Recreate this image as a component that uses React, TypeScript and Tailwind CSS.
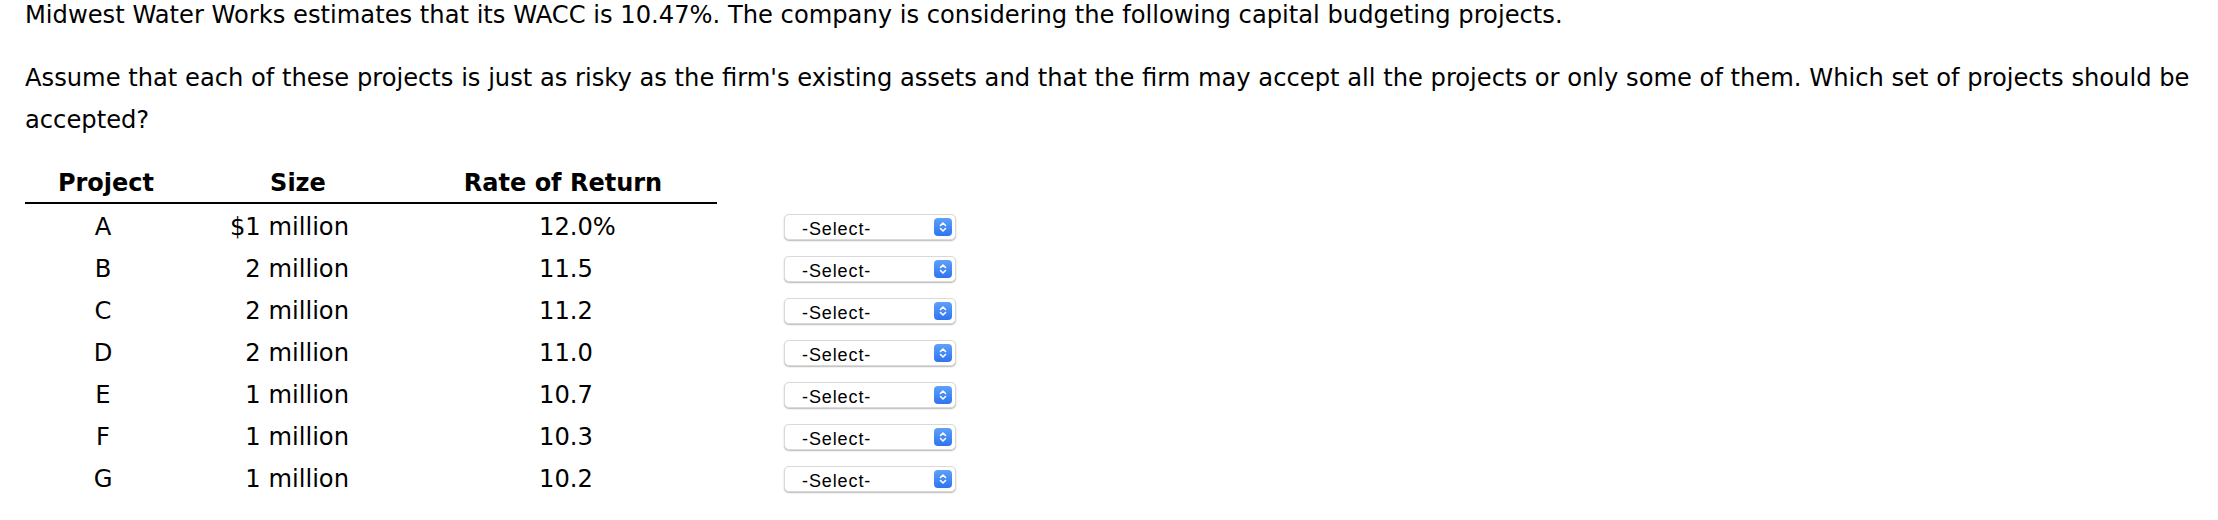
import React from "react";

const rows = [
  { p: "A", s: "$1 million", r: "12.0%" },
  { p: "B", s: "2 million", r: "11.5" },
  { p: "C", s: "2 million", r: "11.2" },
  { p: "D", s: "2 million", r: "11.0" },
  { p: "E", s: "1 million", r: "10.7" },
  { p: "F", s: "1 million", r: "10.3" },
  { p: "G", s: "1 million", r: "10.2" },
];

function SelectBox() {
  return (
    <div className="relative w-[172px] h-[26px] rounded-[5px] border border-[#d9d9d9] bg-white shadow-[0_1px_1.5px_rgba(0,0,0,0.28)]">
      <span className="absolute left-[17px] top-[3px] text-[18px] leading-[22px] tracking-[0.9px] text-black font-['Liberation_Sans',Arial,sans-serif]">
        -Select-
      </span>
      <div className="absolute right-[3px] top-[3px] w-[18px] h-[18px] rounded-[4px] bg-gradient-to-b from-[#5fa0fa] to-[#2e74ef] flex items-center justify-center">
        <svg width="10" height="14" viewBox="0 0 10 14" fill="none">
          <path d="M2.5 5.5 L5 3 L7.5 5.5" stroke="white" strokeWidth="1.6" strokeLinecap="round" strokeLinejoin="round" />
          <path d="M2.5 8.5 L5 11 L7.5 8.5" stroke="white" strokeWidth="1.6" strokeLinecap="round" strokeLinejoin="round" />
        </svg>
      </div>
    </div>
  );
}

export default function App() {
  return (
    <div className="w-[2218px] h-[520px] bg-white text-black pl-[25px] pr-[10px] font-['DejaVu_Sans',sans-serif] text-[24.2px]">
      <p className="leading-[30px] whitespace-nowrap">
        Midwest Water Works estimates that its WACC is 10.47%. The company is considering the following capital budgeting projects.
      </p>
      <p className="mt-[27px] leading-[42px]">
        <span className="whitespace-nowrap">
          Assume that each of these projects is just as risky as the firm's existing assets and that the firm may accept all the projects or only some of them. Which set of projects should be
        </span>
        <br />
        accepted?
      </p>
      <div className="flex mt-[11px]">
        <div className="w-[692px] shrink-0">
          <div className="flex border-b-2 border-black h-[52px] items-end pb-[5px] font-bold text-[24px] leading-[28px]">
            <div className="w-[162px] text-center">Project</div>
            <div className="w-[222px] text-center">Size</div>
            <div className="w-[308px] text-center">Rate of Return</div>
          </div>
          <div className="pt-[2px]">
            {rows.map((row) => (
              <div key={row.p} className="flex h-[42px] items-center leading-[42px]">
                <div className="w-[156px] text-center">{row.p}</div>
                <div className="w-[228px] text-right pr-[60px]">{row.s}</div>
                <div className="w-[308px] pl-[130px]">{row.r}</div>
              </div>
            ))}
          </div>
        </div>
        <div className="ml-[67px] pt-[54px]">
          {rows.map((row) => (
            <div key={row.p} className="h-[42px] flex items-center">
              <SelectBox />
            </div>
          ))}
        </div>
      </div>
    </div>
  );
}
